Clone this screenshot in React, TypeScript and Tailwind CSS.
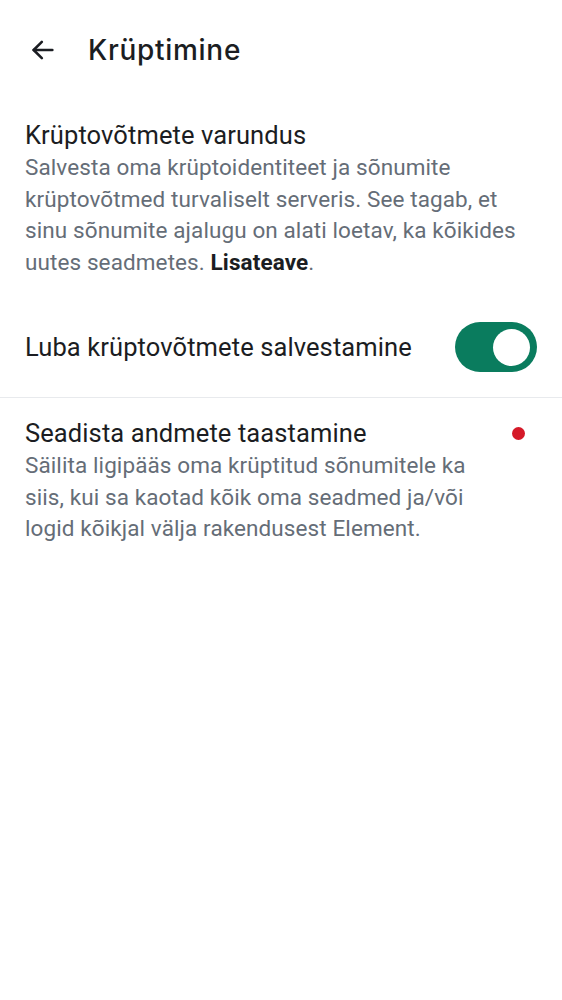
import React from 'react';

const ArrowBack = () => (
  <svg width="28" height="28" viewBox="0 0 24 24" fill="none" stroke="#1b1d22" strokeWidth="2.2" strokeLinecap="round" strokeLinejoin="round">
    <path d="M20 12H4" />
    <path d="M11 5l-7 7 7 7" />
  </svg>
);

export default function App() {
  return (
    <div className="w-[562px] h-[1000px] bg-white text-[#1b1d22]" style={{ fontFamily: 'Roboto, "Noto Sans", sans-serif' }}>
      <div className="flex items-center h-[100px] pl-[29px]">
        <ArrowBack />
        <h1 className="ml-[31px] text-[28px] font-medium tracking-[0.7px]" style={{ fontFamily: 'Inter, Roboto, sans-serif' }}>
          Krüptimine
        </h1>
      </div>

      <div className="px-[25px] pt-[20px]">
        <div className="text-[25.5px] leading-[30px] tracking-[0.1px]">Krüptovõtmete varundus</div>
        <p className="mt-[2px] text-[22.5px] leading-[31.5px] tracking-[0.1px] text-[#656d77]">
          Salvesta oma krüptoidentiteet ja sõnumite krüptovõtmed turvaliselt serveris. See tagab, et sinu sõnumite ajalugu on alati loetav, ka kõikides uutes seadmetes.{' '}
          <span className="font-bold text-[#1b1d22]">Lisateave</span>.
        </p>
      </div>

      <div className="flex items-center justify-between px-[25px] mt-[44px] h-[50px]">
        <span className="text-[25.5px] tracking-[0.1px]">Luba krüptovõtmete salvestamine</span>
        <div className="w-[82px] h-[50px] rounded-full bg-[#0a7c5e] flex items-center justify-end pr-[7px]">
          <div className="w-[37px] h-[37px] rounded-full bg-white" />
        </div>
      </div>

      <div className="mt-[25px] h-px bg-[#e8eaed]" />

      <div className="flex px-[25px] pt-[20px]">
        <div className="flex-1">
          <div className="text-[25.5px] leading-[30px] tracking-[0.1px]">Seadista andmete taastamine</div>
          <p className="mt-[2px] text-[22.5px] leading-[31.5px] tracking-[0.1px] text-[#656d77]">
            Säilita ligipääs oma krüptitud sõnumitele ka siis, kui sa kaotad kõik oma seadmed ja/või logid kõikjal välja rakendusest Element.
          </p>
        </div>
        <div className="w-[13px] h-[13px] rounded-full bg-[#d51928] ml-[17px] mt-[9px] mr-[12px]" />
      </div>
    </div>
  );
}
